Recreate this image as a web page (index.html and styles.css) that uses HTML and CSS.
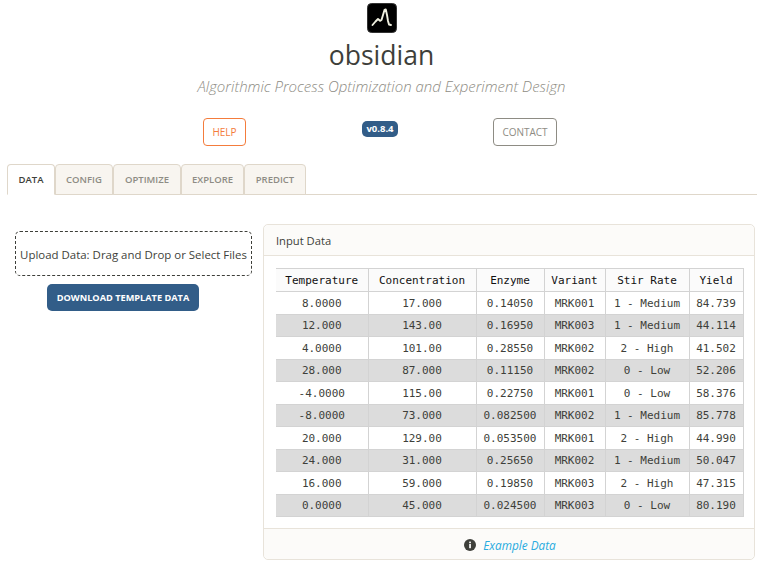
FILE: index.html
```html
<!DOCTYPE html>
<html lang="en">
<head>
<meta charset="utf-8">
<title>obsidian</title>
<link rel="stylesheet" href="styles.css">
</head>
<body>
<header class="masthead">
  <svg class="logo" width="30" height="30" viewBox="0 0 30 30" aria-hidden="true">
    <rect x="0.5" y="0.5" width="29" height="29" rx="4" fill="#000" stroke="#333" stroke-width="1"/>
    <path d="M5.5 22 L8.5 18.5 L11 16 L13 17.8 L14.5 17 L16 12 L17.5 7 L18.8 6.5 L20 12 L21 18 L22 21.5 L24 22" fill="none" stroke="#f0f0e0" stroke-width="1.9" stroke-linecap="round" stroke-linejoin="round"/>
  </svg>
  <h1 class="title">obsidian</h1>
  <p class="subtitle">Algorithmic Process Optimization and Experiment Design</p>
  <div class="actions">
    <a class="btn btn-help">HELP</a>
    <span class="badge">v0.8.4</span>
    <a class="btn btn-contact">CONTACT</a>
  </div>
</header>
<nav class="tabs">
  <a class="tab tab-active">DATA</a>
  <a class="tab">CONFIG</a>
  <a class="tab">OPTIMIZE</a>
  <a class="tab">EXPLORE</a>
  <a class="tab">PREDICT</a>
</nav>
<main class="content">
  <section class="left">
    <div class="upload">Upload Data: Drag and Drop or Select Files</div>
    <a class="download">DOWNLOAD TEMPLATE DATA</a>
  </section>
  <section class="card">
    <div class="card-head">Input Data</div>
    <div class="card-body">
      <table class="data">
        <thead>
          <tr><th class="c1">Temperature</th><th class="c2">Concentration</th><th class="c3">Enzyme</th><th class="c4">Variant</th><th class="c5">Stir Rate</th><th class="c6">Yield</th></tr>
        </thead>
        <tbody>
          <tr><td>8.0000</td><td>17.000</td><td>0.14050</td><td>MRK001</td><td>1 - Medium</td><td>84.739</td></tr>
          <tr><td>12.000</td><td>143.00</td><td>0.16950</td><td>MRK003</td><td>1 - Medium</td><td>44.114</td></tr>
          <tr><td>4.0000</td><td>101.00</td><td>0.28550</td><td>MRK002</td><td>2 - High</td><td>41.502</td></tr>
          <tr><td>28.000</td><td>87.000</td><td>0.11150</td><td>MRK002</td><td>0 - Low</td><td>52.206</td></tr>
          <tr><td>-4.0000</td><td>115.00</td><td>0.22750</td><td>MRK001</td><td>0 - Low</td><td>58.376</td></tr>
          <tr><td>-8.0000</td><td>73.000</td><td>0.082500</td><td>MRK002</td><td>1 - Medium</td><td>85.778</td></tr>
          <tr><td>20.000</td><td>129.00</td><td>0.053500</td><td>MRK001</td><td>2 - High</td><td>44.990</td></tr>
          <tr><td>24.000</td><td>31.000</td><td>0.25650</td><td>MRK002</td><td>1 - Medium</td><td>50.047</td></tr>
          <tr><td>16.000</td><td>59.000</td><td>0.19850</td><td>MRK003</td><td>2 - High</td><td>47.315</td></tr>
          <tr><td>0.0000</td><td>45.000</td><td>0.024500</td><td>MRK003</td><td>0 - Low</td><td>80.190</td></tr>
        </tbody>
      </table>
    </div>
    <div class="card-foot">
      <svg class="info" width="12" height="12" viewBox="0 0 12 12" aria-hidden="true">
        <circle cx="6" cy="6" r="6" fill="#3e3f3a"/>
        <rect x="5.2" y="5" width="1.7" height="4.2" fill="#fff"/>
        <rect x="5.2" y="2.6" width="1.7" height="1.6" fill="#fff"/>
      </svg>
      <a class="example">Example Data</a>
    </div>
  </section>
</main>
</body>
</html>
```
FILE: styles.css
```css
* { box-sizing: border-box; }
html, body { margin: 0; padding: 0; }
body {
  width: 757px;
  height: 562px;
  overflow: hidden;
  background: #fff;
  color: #3e3f3a;
  font-family: "Open Sans", "Noto Sans", sans-serif;
}
.masthead { display: flex; flex-direction: column; align-items: center; padding-top: 3px; margin-left: 6px; }
.logo { display: block; }
.title { margin: 2px 0 0; height: 40px; font-size: 26.5px; line-height: 40px; font-weight: 400; color: #3e3f3a; }
.subtitle { margin: 1px 0 0; height: 20px; font-size: 15px; line-height: 20px; font-style: italic; font-weight: 300; color: #8e8c84; white-space: nowrap; }
.actions { display: flex; align-items: flex-start; margin: 22px 0 0 -6px; width: 757px; padding-left: 203px; }
.btn { display: block; height: 28px; line-height: 26px; font-size: 10px; font-weight: 400; text-align: center; border-radius: 4px; border: 1px solid; }
.btn-help { width: 43px; color: #f47c3c; border-color: #f47c3c; }
.btn-contact { width: 64px; color: #8e8c84; border-color: #8e8c84; margin-left: 95px; }
.badge { width: 36px; height: 16px; margin: 3px 0 0 116px; line-height: 16px; text-align: center; font-size: 9.5px; font-weight: 700; color: #fff; background: #325d88; border-radius: 5px; }
.tabs { display: flex; margin: 18px 0 0 7px; height: 31px; border-bottom: 1px solid #dfd7ca; align-items: flex-start; }
.tab { display: block; height: 31px; line-height: 29px; font-size: 9.5px; font-weight: 600; text-align: center; color: #8e8c84; background: #f8f5f0; border: 1px solid #dfd7ca; border-bottom: 1px solid #dfd7ca; border-radius: 4px 4px 0 0; }
.tab:nth-child(1) { width: 48px; }
.tab:nth-child(2) { width: 58px; }
.tab:nth-child(3) { width: 68px; }
.tab:nth-child(4) { width: 63px; }
.tab:nth-child(5) { width: 62px; }
.tab-active { color: #3e3f3a; background: #fff; border-bottom-color: #fff; }
.content { display: flex; align-items: flex-start; margin-top: 29px; padding-left: 15px; }
.left { width: 237px; margin-top: 7px; display: flex; flex-direction: column; align-items: flex-start; flex: none; }
.upload { width: 237px; height: 45px; line-height: 45px; font-size: 11.45px; text-align: center; white-space: nowrap; border: 1px dashed #3e3f3a; border-radius: 5px; }
.download { display: block; width: 152px; height: 27px; margin: 8px 0 0 32px; line-height: 27px; text-align: center; font-size: 9.2px; font-weight: 700; color: #fff; background: #325d88; border-radius: 5px; }
.card { width: 492px; height: 336px; margin-left: 11px; flex: none; display: flex; flex-direction: column; border: 1px solid #e8e3da; border-radius: 5px; }
.card-head { height: 31px; padding-left: 12px; line-height: 32px; font-size: 11.2px; background: #fcfbf9; border-bottom: 1px solid #e8e3da; border-radius: 5px 5px 0 0; }
.card-body { flex: 1; padding: 12px 0 0 12px; }
.data { border-collapse: collapse; table-layout: fixed; width: 467px; font-family: "DejaVu Sans Mono", monospace; font-size: 11px; text-align: center; color: #3e3f3a; }
.data th, .data td { border: 1px solid #d3d3d3; padding: 0; overflow: hidden; white-space: nowrap; }
.data th:first-child, .data td:first-child { border-left: 0; }
.data th { height: 23px; font-weight: 400; background: #fbfbfb; color: #111; }
.data td { height: 22.5px; padding-top: 1px; background: #fff; }
.data tbody tr:nth-child(even) td { background: #dcdcdc; }
.c1 { width: 92px; }
.c2 { width: 108px; }
.c3 { width: 68px; }
.c4 { width: 61px; }
.c5 { width: 84px; }
.c6 { width: 54px; }
.card-foot { height: 31px; display: flex; align-items: center; justify-content: center; gap: 7px; padding: 1px 0 0 2px; background: #fcfbf9; border-top: 1px solid #e8e3da; border-radius: 0 0 5px 5px; font-size: 11.8px; }
.example { font-style: italic; color: #29abe0; }
.info { display: block; }
```
